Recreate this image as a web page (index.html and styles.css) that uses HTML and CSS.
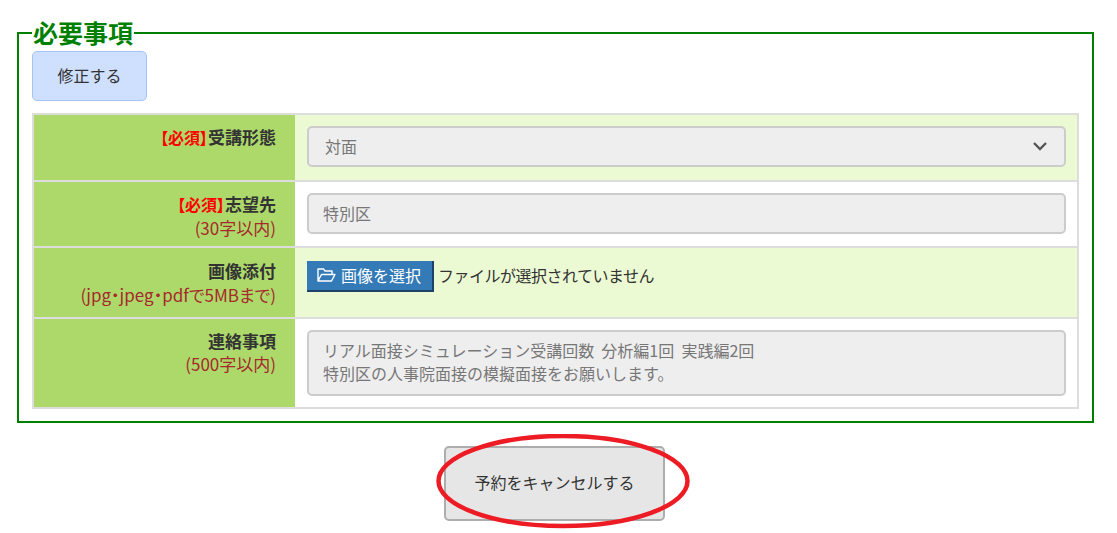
FILE: index.html
```html
<!DOCTYPE html>
<html lang="ja">
<head>
    <meta charset="UTF-8">
    <title>予約内容</title>
    <link rel="stylesheet" href="styles.css">
</head>
<body>
    <main class="page">
        <fieldset class="required-box">
            <legend>必要事項</legend>
            <button type="button" class="edit-btn">修正する</button>
            <table class="form-table">
                <tr class="row-tint">
                    <th><span class="must">【必須】</span>受講形態</th>
                    <td>
                        <div class="select-wrap">
                            <select class="field" disabled>
                                <option>対面</option>
                            </select>
                            <svg class="select-arrow" viewBox="0 0 14 10" width="14" height="10" aria-hidden="true">
                                <path d="M1 2l6 6 6-6" fill="none" stroke="#555" stroke-width="2.4"/>
                            </svg>
                        </div>
                    </td>
                </tr>
                <tr>
                    <th><span class="must">【必須】</span>志望先<br><span class="note">(30字以内)</span></th>
                    <td><input class="field" type="text" value="特別区" disabled></td>
                </tr>
                <tr class="row-tint row-file">
                    <th>画像添付<br><span class="note">(jpg・jpeg・pdfで5MBまで)</span></th>
                    <td class="file-cell">
                        <span class="file-btn">
                            <svg viewBox="0 0 19 16" width="19" height="16" aria-hidden="true">
                                <path d="M1 14V2h5.500l1.500 2h7v3.500M1 14l3.500-6.500H18L14.500 14z" fill="none" stroke="#fff" stroke-width="1.4" stroke-linejoin="round"/>
                            </svg>画像を選択</span><span class="file-name">ファイルが選択されていません</span>
                    </td>
                </tr>
                <tr>
                    <th>連絡事項<br><span class="note">(500字以内)</span></th>
                    <td><textarea class="field memo" disabled>リアル面接シミュレーション受講回数  分析編1回  実践編2回
特別区の人事院面接の模擬面接をお願いします。</textarea></td>
                </tr>
            </table>
        </fieldset>

        <div class="cancel-area">
            <div class="cancel-wrap">
                <button type="button" class="cancel-btn">予約をキャンセルする</button>
                <!-- 赤丸の注釈 -->
                <svg class="circle-mark" viewBox="0 0 254 96" width="254" height="96" aria-hidden="true">
                    <ellipse cx="127" cy="47" rx="124.5" ry="45" fill="none" stroke="#ed1c24" stroke-width="4.5"/>
                </svg>
            </div>
        </div>
    </main>
</body>
</html>
```

FILE: styles.css
```css
* {
    box-sizing: border-box;
}

body {
    margin: 0;
    background-color: #fff;
    color: #333;
    font-family: "Noto Sans CJK JP", "Noto Sans", sans-serif;
    font-size: 16px;
}

.page {
    padding: 20px 23px 11px 17px;
}

/* 必要事項 */
.required-box {
    margin: 0;
    min-width: 0;
    padding: 0 13px 12px 13px;
    border: 2px solid #008000;
}

.required-box legend {
    padding: 0 1px;
    margin-left: 0;
    color: #008000;
    font-size: 25px;
    font-weight: bold;
    line-height: 25px;
    height: 25px;
}

.edit-btn {
    display: block;
    width: 115px;
    height: 50px;
    margin: 6px 0 12px;
    padding-bottom: 3px;
    background-color: #cfe0ff;
    border: 1px solid #a3c4f5;
    border-radius: 5px;
    color: #333;
    font-family: inherit;
    font-size: 16px;
}

/* フォーム */
.form-table {
    width: 100%;
    border-collapse: collapse;
    table-layout: fixed;
}

.form-table th,
.form-table td {
    border: 2px solid #ddd;
    vertical-align: top;
}

.form-table th {
    width: 262px;
    padding: 10px 19px 0 0;
    border-right: none;
    background-color: #add96b;
    color: #333;
    font-size: 17px;
    font-weight: bold;
    line-height: 23px;
    text-align: right;
}

.form-table td {
    padding: 11px 11px 12px 12px;
    border-left: none;
    background-color: #fff;
}

.form-table tr:first-child td {
    padding-bottom: 13px;
}

.form-table tr:last-child td {
    padding-bottom: 11px;
}

.form-table .row-tint td {
    background-color: #ebfad2;
}

.form-table .row-file th {
    padding-top: 11px;
    line-height: 24px;
}

.must {
    color: #f00;
    font-size: 16px;
    font-feature-settings: "palt";
}

.note {
    color: #a52a2a;
    font-weight: normal;
    font-feature-settings: "palt";
}

.field {
    display: block;
    width: 100%;
    height: 41px;
    padding: 0 14px 2px;
    background-color: #eee;
    border: 2px solid #ccc;
    border-radius: 5px;
    color: #777;
    font-family: inherit;
    font-size: 16px;
    opacity: 1;
}

.select-wrap {
    position: relative;
}

.select-wrap select {
    appearance: none;
    padding-left: 16px;
}

.select-arrow {
    position: absolute;
    top: 15px;
    right: 19px;
}

.memo {
    height: 66px;
    padding: 7px 14px;
    line-height: 23px;
    resize: none;
    overflow: hidden;
}

.form-table .file-cell {
    height: 71px;
    padding-top: 13px;
    line-height: 28px;
}

.file-btn {
    display: inline-flex;
    align-items: center;
    gap: 5px;
    width: 127px;
    height: 31px;
    padding: 0 0 2px 10px;
    background-color: #337ab7;
    border-right: 2px solid #1d4468;
    border-bottom: 2px solid #1d4468;
    color: #fff;
    vertical-align: top;
}

.file-name {
    margin-left: 4px;
    letter-spacing: -0.5px;
    vertical-align: top;
}

/* キャンセル */
.cancel-area {
    display: flex;
    justify-content: center;
    margin: 23px 2px 0 0;
}

.cancel-wrap {
    position: relative;
}

.cancel-btn {
    display: block;
    width: 221px;
    height: 75px;
    padding-bottom: 5px;
    background-color: #e6e6e6;
    border: 2px solid #adadad;
    border-radius: 5px;
    color: #333;
    font-family: inherit;
    font-size: 16px;
}

.circle-mark {
    position: absolute;
    top: -12px;
    left: -8px;
}
```
